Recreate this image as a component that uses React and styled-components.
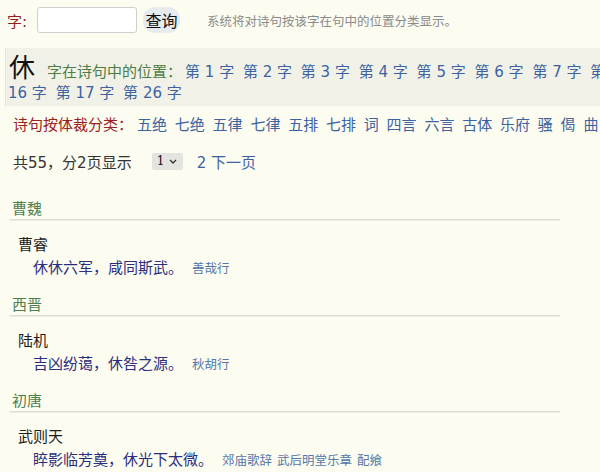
import React from "react";
import styled, { createGlobalStyle } from "styled-components";

const GlobalStyle = createGlobalStyle`
  html, body {
    margin: 0;
    padding: 0;
    overflow: hidden;
    background: #fcfcf1;
  }
  body {
    font-family: "DejaVu Sans", "Noto Sans CJK SC", sans-serif;
    font-size: 15px;
    color: #222;
  }
`;

const positions = [1, 2, 3, 4, 5, 6, 7, 8, 9, 10, 11, 12, 13, 14, 15, 16, 17, 26];
const genres = ["五绝", "七绝", "五律", "七律", "五排", "七排", "词", "四言", "六言", "古体", "乐府", "骚", "偈", "曲", "赋", "文"];

const sections = [
  { dynasty: "曹魏", author: "曹睿", verse: "休休六军，咸同斯武。", titles: ["善哉行"] },
  { dynasty: "西晋", author: "陆机", verse: "吉凶纷蔼，休咎之源。", titles: ["秋胡行"] },
  { dynasty: "初唐", author: "武则天", verse: "睟影临芳奠，休光下太微。", titles: ["郊庙歌辞", "武后明堂乐章", "配飨"] },
];

const Page = styled.div`
  width: 1180px;
`;

const SearchRow = styled.form`
  display: flex;
  align-items: center;
  height: 26px;
  padding: 7px 0 0 7px;
`;

const Label = styled.span`
  color: #8e1f1f;
  font-size: 15px;
`;

const Input = styled.input`
  box-sizing: border-box;
  width: 100px;
  height: 26px;
  margin-left: 10px;
  border: 1px solid #cfcfcf;
  border-radius: 3px;
  background: #fff;
`;

const Button = styled.button`
  box-sizing: border-box;
  width: 37px;
  height: 26px;
  margin-left: 6px;
  padding: 0;
  border: none;
  border-radius: 12px;
  background: #e7ebee;
  font-family: "Noto Sans CJK SC", sans-serif;
  font-size: 16px;
  color: #111;
`;

const Hint = styled.span`
  margin-left: 27px;
  font-size: 12.5px;
  color: #8a8a8a;
`;

const PositionBox = styled.div`
  width: 1135px;
  margin: 15px 0 0 5px;
  padding: 3px 7px 2px 2px;
  background: #f1f1e8;
  border-left: 1px solid #e6e6dc;
  line-height: 21px;
`;

const Char = styled.span`
  font-family: "Noto Sans CJK SC", sans-serif;
  font-size: 26px;
  line-height: 30px;
  margin: 0 12px 0 1px;
  color: #111;
`;

const GreenLabel = styled.span`
  color: #4d7d45;
  margin-right: 3px;
`;

const Link = styled.a`
  color: ${p => (p.$small ? "#5577a6" : "#3c63a0")};
  font-size: ${p => (p.$small ? "12.5px" : "15px")};
  text-decoration: none;
  margin-right: ${p => p.$gap || "5px"};
`;

const GenreRow = styled.div`
  margin-top: 9px;
  padding-left: 13px;
  line-height: 20px;
  white-space: nowrap;
`;

const RedLabel = styled.span`
  color: #9a2222;
  margin-right: 4px;
`;

const PagerRow = styled.div`
  display: flex;
  align-items: center;
  margin-top: 16px;
  padding-left: 13px;
  height: 20px;
  color: #333;
`;

const SelectWrap = styled.span`
  position: relative;
  display: inline-flex;
  margin-left: 20px;
`;

const Select = styled.select`
  appearance: none;
  width: 31px;
  height: 17px;
  padding: 0 0 0 5px;
  border: none;
  border-radius: 2px;
  background: #e3e3e0;
  font-family: "DejaVu Serif", serif;
  font-size: 12px;
  color: #111;
`;

const Chevron = styled.svg`
  position: absolute;
  right: 6px;
  top: 6px;
  pointer-events: none;
`;

const Section = styled.section`
  width: 550px;
  margin-left: 10px;
`;

const Dynasty = styled.div`
  margin-top: ${p => (p.$first ? "28px" : "16px")};
  padding-left: 2px;
  line-height: 20px;
  color: #4f7f4f;
  border-bottom: 1px solid #dedccf;
  box-shadow: 0 1px 0 #efeee3;
`;

const Author = styled.div`
  margin-top: 15px;
  padding-left: 8px;
  line-height: 20px;
  color: #1e1e1e;
`;

const Verse = styled.div`
  margin-top: 3px;
  padding-left: 23px;
  line-height: 20px;
`;

const Line = styled.span`
  color: #2b2d7d;
  margin-right: 9px;
`;

export default function App() {
  return (
    <Page>
      <GlobalStyle />
      <SearchRow onSubmit={e => e.preventDefault()}>
        <Label>字:</Label>
        <Input type="text" />
        <Button type="submit">查询</Button>
        <Hint>系统将对诗句按该字在句中的位置分类显示。</Hint>
      </SearchRow>

      <PositionBox>
        <Char>休</Char>
        <GreenLabel>字在诗句中的位置：</GreenLabel>
        {positions.map(n => (
          <React.Fragment key={n}>
            <Link href="#" $gap="4px">第 {n} 字</Link>{" "}
          </React.Fragment>
        ))}
      </PositionBox>

      <GenreRow>
        <RedLabel>诗句按体裁分类：</RedLabel>
        {genres.map(g => (
          <React.Fragment key={g}>
            <Link href="#" $gap="3px">{g}</Link>{" "}
          </React.Fragment>
        ))}
      </GenreRow>

      <PagerRow>
        <span>共55，分2页显示</span>
        <SelectWrap>
          <Select defaultValue="1">
            <option value="1">1</option>
            <option value="2">2</option>
          </Select>
          <Chevron width="8" height="5" viewBox="0 0 8 5">
            <path d="M1 1l3 3 3-3" fill="none" stroke="#333" strokeWidth="1.3" />
          </Chevron>
        </SelectWrap>
        <Link href="#" style={{ marginLeft: 14 }}>2 下一页</Link>
      </PagerRow>

      {sections.map((s, i) => (
        <Section key={s.dynasty}>
          <Dynasty $first={i === 0}>{s.dynasty}</Dynasty>
          <Author>{s.author}</Author>
          <Verse>
            <Line>{s.verse}</Line>
            {s.titles.map(t => (
              <Link key={t} href="#" $small $gap="1px">{t} </Link>
            ))}
          </Verse>
        </Section>
      ))}
    </Page>
  );
}
